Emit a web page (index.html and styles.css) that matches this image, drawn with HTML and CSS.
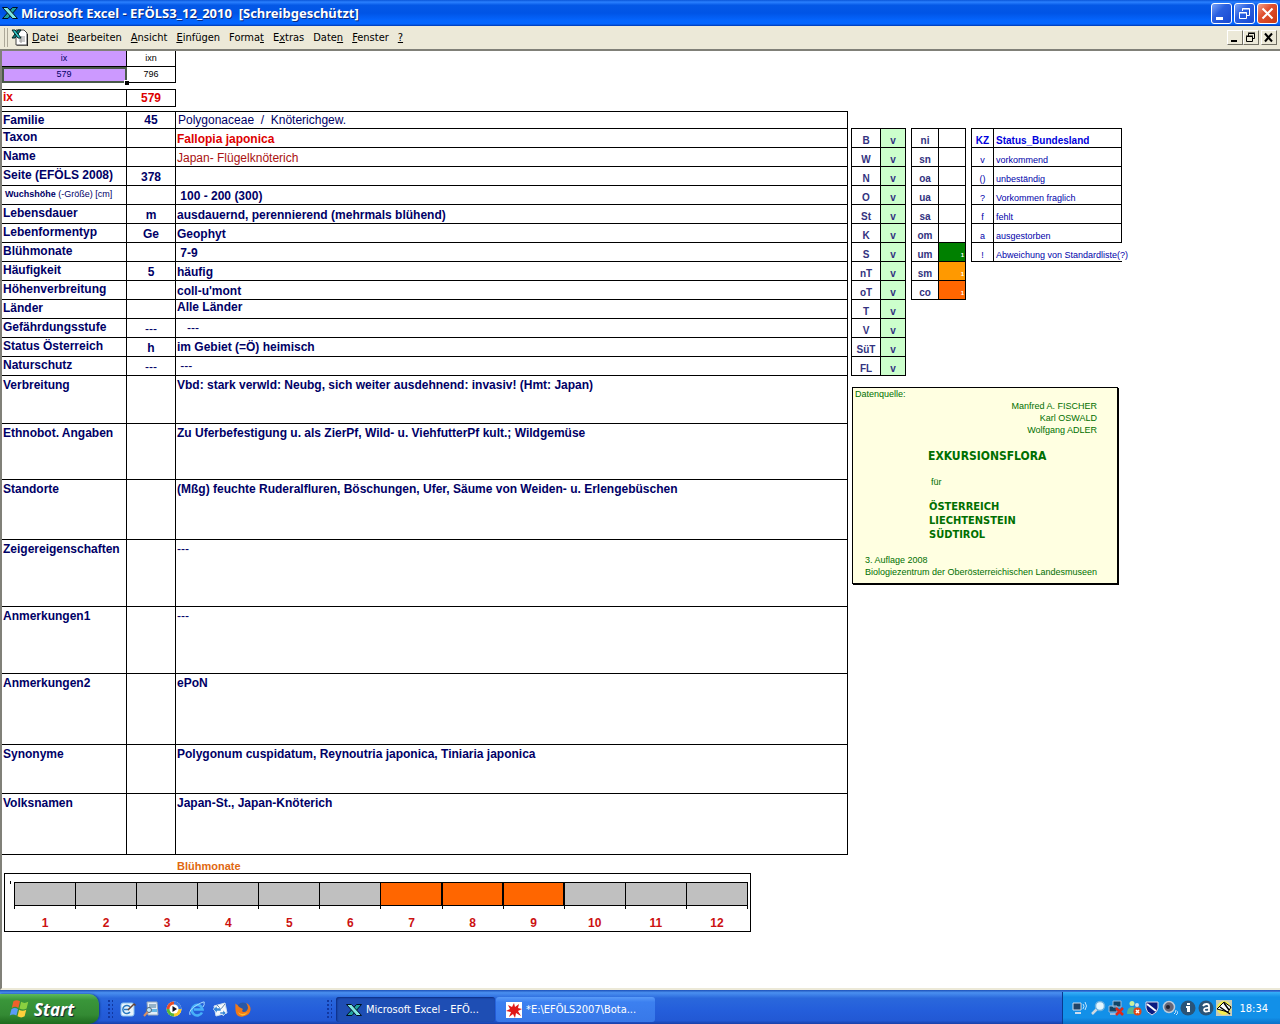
FILE: index.html
```
<!DOCTYPE html>
<html lang="de">
<head>
    <meta charset="UTF-8">
    <meta name="viewport" content="width=device-width, initial-scale=1.0">
    <title>Microsoft Excel - EFÖLS3_12_2010</title>
    <link rel="stylesheet" href="styles.css">
</head>
<body>
    <header class="titlebar">
        <svg class="icon" viewBox="0 0 16 16"><path d="M10.500 2.500h5L6 13.500H.5z" fill="#1fa0a0" stroke="#012"/><path d="M.5 2.500h5l10 11h-5z" fill="#7fe8e0" stroke="#012"/></svg>
        <h1>Microsoft Excel - EFÖLS3_12_2010&nbsp; [Schreibgeschützt]</h1>
        <div class="win-buttons">
            <button aria-label="Minimieren"><svg viewBox="0 0 19 19"><path d="M4 13h7v3H4z" fill="#fff"/></svg></button>
            <button aria-label="Wiederherstellen"><svg viewBox="0 0 19 19"><path d="M7.500 7V4.500h7v7H12M7 5h8M4.500 8.500h7v6h-7zM4 9h8" fill="none" stroke="#fff"/></svg></button>
            <button class="close" aria-label="Schließen"><svg viewBox="0 0 19 19"><path d="M4.500 4.500l10 10M14.500 4.500l-10 10" stroke="#fff" stroke-width="2"/></svg></button>
        </div>
    </header>
    <nav class="menubar">
        <span class="grip"></span>
        <svg class="doc" viewBox="0 0 17 17"><path d="M5 1h8l3 3v12H5z" fill="#fff" stroke="#444"/><path d="M16.500 5v12H6" fill="none" stroke="#222"/><path d="M8 8h6M8 10h6M8 12h6M10 7v7" stroke="#999"/><path d="M7 1h3L4 9H1z" fill="#0a8080" stroke="#022"/><path d="M1 1h3l6 8H7z" fill="#3cc" stroke="#022"/></svg>
        <button><u>D</u>atei</button>
        <button><u>B</u>earbeiten</button>
        <button><u>A</u>nsicht</button>
        <button><u>E</u>infügen</button>
        <button>Forma<u>t</u></button>
        <button>E<u>x</u>tras</button>
        <button>Date<u>n</u></button>
        <button><u>F</u>enster</button>
        <button><u>?</u></button>
        <div class="doc-buttons">
            <button aria-label="Mappe minimieren"><svg viewBox="0 0 13 13"><path d="M3 9h6v2H3z"/></svg></button>
            <button aria-label="Mappe wiederherstellen"><svg viewBox="0 0 13 13"><path d="M4.500 5V2.500h6v5H8M4 2h7M2.500 5.500h6v5h-6zM2 5h7" fill="none" stroke="#000"/></svg></button>
            <button class="close" aria-label="Mappe schließen"><svg viewBox="0 0 13 13"><path d="M3 2.500l7 8M10 2.500l-7 8" stroke="#000" stroke-width="2"/></svg></button>
        </div>
    </nav>
    <main class="sheet">
        <section class="record">
            <table class="cells index">
                <tr><td class="lilac">ix</td><td>ixn</td></tr>
                <tr><td class="lilac selected">579</td><td>796</td></tr>
            </table>
            <table class="cells current">
                <tr><th scope="row">ix</th><td>579</td></tr>
            </table>
            <table class="cells plant">
                <tr class="first"><th scope="row">Familie</th><td>45</td><td class="plain">Polygonaceae&nbsp; /&nbsp; Knöterichgew.</td></tr>
                <tr><th scope="row">Taxon</th><td></td><td class="taxon">Fallopia japonica</td></tr>
                <tr><th scope="row">Name</th><td></td><td class="name">Japan- Flügelknöterich</td></tr>
                <tr><th scope="row">Seite (EFÖLS 2008)</th><td>378</td><td></td></tr>
                <tr><th scope="row" class="small"><b>Wuchshöhe</b> (-Größe) [cm]</th><td></td><td>&nbsp;100 - 200 (300)</td></tr>
                <tr><th scope="row">Lebensdauer</th><td>m</td><td>ausdauernd, perennierend (mehrmals blühend)</td></tr>
                <tr><th scope="row">Lebenformentyp</th><td>Ge</td><td>Geophyt</td></tr>
                <tr><th scope="row">Blühmonate</th><td></td><td>&nbsp;7-9</td></tr>
                <tr><th scope="row">Häufigkeit</th><td>5</td><td>häufig</td></tr>
                <tr><th scope="row">Höhenverbreitung</th><td></td><td>coll-u'mont</td></tr>
                <tr><th scope="row">Länder</th><td></td><td class="top">Alle Länder</td></tr>
                <tr><th scope="row">Gefährdungsstufe</th><td class="none">---</td><td class="middle none">&nbsp;&nbsp; ---</td></tr>
                <tr><th scope="row">Status Österreich</th><td>h</td><td class="middle">im Gebiet (=Ö) heimisch</td></tr>
                <tr><th scope="row">Naturschutz</th><td class="none">---</td><td class="middle none">&nbsp;---</td></tr>
                <tr class="tall verbreitung"><th scope="row">Verbreitung</th><td></td><td>Vbd: stark verwld: Neubg, sich weiter ausdehnend: invasiv! (Hmt: Japan)</td></tr>
                <tr class="tall angaben"><th scope="row">Ethnobot. Angaben</th><td></td><td>Zu Uferbefestigung u. als ZierPf, Wild- u. ViehfutterPf kult.; Wildgemüse</td></tr>
                <tr class="tall standorte"><th scope="row">Standorte</th><td></td><td>(Mßg) feuchte Ruderalfluren, Böschungen, Ufer, Säume von Weiden- u. Erlengebüschen</td></tr>
                <tr class="tall notes"><th scope="row">Zeigereigenschaften</th><td></td><td class="none">---</td></tr>
                <tr class="tall notes"><th scope="row">Anmerkungen1</th><td></td><td class="none">---</td></tr>
                <tr class="tall notes2"><th scope="row">Anmerkungen2</th><td></td><td>ePoN</td></tr>
                <tr class="tall synonyme"><th scope="row">Synonyme</th><td></td><td>Polygonum cuspidatum, Reynoutria japonica, Tiniaria japonica</td></tr>
                <tr class="tall volksnamen"><th scope="row">Volksnamen</th><td></td><td>Japan-St., Japan-Knöterich</td></tr>
            </table>
            <h2>Blühmonate</h2>
            <div class="chart">
                <ol>
                    <li>1</li>
                    <li>2</li>
                    <li>3</li>
                    <li>4</li>
                    <li>5</li>
                    <li>6</li>
                    <li class="bloom">7</li>
                    <li class="bloom">8</li>
                    <li class="bloom">9</li>
                    <li>10</li>
                    <li>11</li>
                    <li>12</li>
                </ol>
            </div>
        </section>
        <aside class="side">
            <div class="status-tables">
                <table class="cells codes lands">
                    <tr><th scope="row">B</th><td>v</td></tr>
                    <tr><th scope="row">W</th><td>v</td></tr>
                    <tr><th scope="row">N</th><td>v</td></tr>
                    <tr><th scope="row">O</th><td>v</td></tr>
                    <tr><th scope="row">St</th><td>v</td></tr>
                    <tr><th scope="row">K</th><td>v</td></tr>
                    <tr><th scope="row">S</th><td>v</td></tr>
                    <tr><th scope="row">nT</th><td>v</td></tr>
                    <tr><th scope="row">oT</th><td>v</td></tr>
                    <tr><th scope="row">T</th><td>v</td></tr>
                    <tr><th scope="row">V</th><td>v</td></tr>
                    <tr><th scope="row">SüT</th><td>v</td></tr>
                    <tr><th scope="row">FL</th><td>v</td></tr>
                </table>
                <table class="cells codes levels">
                    <tr><th scope="row">ni</th><td></td></tr>
                    <tr><th scope="row">sn</th><td></td></tr>
                    <tr><th scope="row">oa</th><td></td></tr>
                    <tr><th scope="row">ua</th><td></td></tr>
                    <tr><th scope="row">sa</th><td></td></tr>
                    <tr><th scope="row">om</th><td></td></tr>
                    <tr><th scope="row">um</th><td class="um">1</td></tr>
                    <tr><th scope="row">sm</th><td class="sm">1</td></tr>
                    <tr><th scope="row">co</th><td class="co">1</td></tr>
                </table>
                <table class="cells legend">
                    <tr><th>KZ</th><th>Status_Bundesland</th></tr>
                    <tr><td>v</td><td>vorkommend</td></tr>
                    <tr><td>()</td><td>unbeständig</td></tr>
                    <tr><td>?</td><td>Vorkommen fraglich</td></tr>
                    <tr><td>f</td><td>fehlt</td></tr>
                    <tr><td>a</td><td>ausgestorben</td></tr>
                    <tr><td>!</td><td class="open">Abweichung von Standardliste(?)</td></tr>
                </table>
            </div>
            <div class="source">
                <p>Datenquelle:</p>
                <p class="authors">Manfred A. FISCHER<br>Karl OSWALD<br>Wolfgang ADLER</p>
                <h3>EXKURSIONSFLORA</h3>
                <p class="for">für</p>
                <p class="countries">ÖSTERREICH<br>LIECHTENSTEIN<br>SÜDTIROL</p>
                <p class="edition">3. Auflage 2008<br>Biologiezentrum der Oberösterreichischen Landesmuseen</p>
            </div>
        </aside>
    </main>
    <footer class="taskbar">
        <button class="start">
            <svg viewBox="0 0 20 20"><path d="M4 3q3-2 6 0L8.500 9q-3-2-6 0z" fill="#f0602c"/><path d="M11 3.500q3 2 6.500 0L16 9.500q-3 2-6.500 0z" fill="#8ad040"/><path d="M2.200 10.200q3-2 6 0L6.700 16q-3-2-6 0z" fill="#5a9cf8"/><path d="M9.200 10.700q3 2 6.500 0l-1.500 6q-3 2-6.500 0z" fill="#fcd03c"/></svg>
            Start
        </button>
        <div class="quick">
            <span class="dots"></span>
            <svg viewBox="0 0 16 16"><rect x="1" y="2" width="13" height="13" rx="2" fill="#e8f4fc" stroke="#8cc4f0"/><path d="M10 6a4 4 0 1 0 0 5M4 8.500h5" fill="none" stroke="#2878c0" stroke-width="1.500"/><path d="M8 9l6-6 1.500 1.500" fill="none" stroke="#643" stroke-width="1.500"/></svg>
            <svg viewBox="0 0 16 16"><path d="M4 1h10l1 13H5z" fill="#e4eef8" stroke="#9ab"/><path d="M6 4h7M6 6h7" stroke="#479"/><path d="M6 8h8v3H6z" fill="#68b8e8"/><circle cx="6" cy="9" r="2.500" fill="#bfe4fa" stroke="#567"/><path d="M4.500 11L1 15" stroke="#d89060" stroke-width="2"/></svg>
            <svg viewBox="0 0 16 16"><circle cx="8" cy="8" r="7.500" fill="#eee"/><path d="M8 .5A7.500 7.500 0 0 0 .5 8H8z" fill="#e84c28"/><path d="M8 .5A7.500 7.500 0 0 1 15.500 8H8z" fill="#3c78e0"/><path d="M.5 8A7.500 7.500 0 0 0 8 15.500V8z" fill="#58b838"/><path d="M15.500 8A7.500 7.500 0 0 1 8 15.500V8z" fill="#f8c828"/><circle cx="8" cy="8" r="4.500" fill="#fff"/><path d="M6.500 5l4.500 3-4.500 3z" fill="#112"/></svg>
            <svg viewBox="0 0 16 16"><path d="M13 11.500a5.300 5.300 0 1 1 .5-3H5" fill="none" stroke="#48b0f8" stroke-width="2.600"/><path d="M1 14Q-1 9 8 4t7-2q1 1-1 4" fill="none" stroke="#a8dcff"/></svg>
            <svg viewBox="0 0 16 16"><path d="M2 5l11-3 2 10-11 3z" fill="#f4f8fc" stroke="#cde"/><path d="M5 4l4 4 4-5" fill="none" stroke="#68a"/><path d="M1 8l4-3v2h4v3H5v2zM14 12l-3-3v2H8v2h3v2z" fill="#3888d8" stroke="#fff" stroke-width=".5"/></svg>
            <svg viewBox="0 0 16 16"><circle cx="8" cy="8" r="6.500" fill="#2858a8"/><path d="M1 3q2 1 3 3l4 2q-2 3 1 3t4-4q0-3-2-5 5 2 4.500 7T8 15.500.5 9 1 3z" fill="#f07818"/><path d="M3 11q4 4 10 0-3 4-6 3.500T3 11z" fill="#fcc030"/></svg>
            <span class="dots last"></span>
        </div>
        <button class="task active"><svg viewBox="0 0 16 16"><path d="M10.500 2.500h5L6 13.500H.5z" fill="#1fa0a0" stroke="#012"/><path d="M.5 2.500h5l10 11h-5z" fill="#7fe8e0" stroke="#012"/></svg>Microsoft Excel - EFÖ...</button>
        <button class="task"><svg viewBox="0 0 16 16"><path d="M0 0h16v16H0z" fill="#fff"/><path d="M8 1l1 4 4-3-1 4 4 1-4 2 3 5-5-3-1 5-2-4-4 3 2-5-5-1 4-2-2-4 4 2z" fill="#e01818"/></svg>*E:\EFÖLS2007\Bota...</button>
        <div class="tray">
            <svg viewBox="0 0 16 16"><path d="M1 3h8v7H1z" fill="#246" stroke="#cde"/><path d="M3 13h6" stroke="#cde" stroke-width="2"/><path d="M11 4q2 2 0 5M13 2q3 4 0 8" fill="none" stroke="#bfe4ff"/></svg>
            <svg viewBox="0 0 16 16"><circle cx="10" cy="6" r="4.500" fill="#e4f6ff" stroke="#6ab0e0" stroke-width="1.500"/><path d="M6.500 9.500L2 14" stroke="#d0d8e0" stroke-width="2.500"/></svg>
            <svg viewBox="0 0 16 16"><path d="M5 1h8v6H5zM1 6h8v6H1z" fill="#146" stroke="#9bd"/><path d="M2 14h6" stroke="#9bd" stroke-width="2"/><path d="M8 8l7 7M15 8l-7 7" stroke="#e02818" stroke-width="2.500"/></svg>
            <svg viewBox="0 0 16 16"><circle cx="6" cy="3.500" r="2.500" fill="#c8f0a0"/><path d="M1 14q0-7 5-7t5 7z" fill="#58b890"/><circle cx="11" cy="5" r="2" fill="#cde"/><path d="M7 12q0-5 4-5t4 5z" fill="#3898c8"/><circle cx="11.500" cy="11.500" r="4" fill="#e04818"/><path d="M10 10l3 3M13 10l-3 3" stroke="#fff" stroke-width="1.500"/></svg>
            <svg viewBox="0 0 16 16"><path d="M2 2h12v6q0 4-6 7-6-3-6-7z" fill="#0a1a80" stroke="#dde"/><path d="M3 4l9 7" stroke="#fff" stroke-width="2"/></svg>
            <svg viewBox="0 0 16 16"><circle cx="7" cy="7" r="5.500" fill="#667" stroke="#bcd" stroke-width="1.500"/><circle cx="6" cy="7" r="2" fill="#223"/><path d="M12 14q2-1 2-4M14 15q2-1 2-4" fill="none" stroke="#cfe8ff"/></svg>
            <svg viewBox="0 0 16 16"><circle cx="8" cy="8" r="7.500" fill="#2a5478"/><path d="M7 3h3v2H7zM6 6h4v6H7V8H6z" fill="#fff"/></svg>
            <svg viewBox="0 0 16 16"><circle cx="8" cy="8" r="7.500" fill="#2a5478"/><path d="M5 6q1-2 3.500-2T11 6v6M11 8Q6 7.500 6 10t5 1" fill="none" stroke="#fff" stroke-width="1.800"/></svg>
            <svg viewBox="0 0 16 16"><path d="M0 0h16v16H0z" fill="#c8ccb8"/><circle cx="8" cy="8" r="7" fill="#f4ec50"/><path d="M1 9l7-7 7 5-3 5z" fill="#fff" stroke="#000"/><path d="M4 7l10 7M8 3l5 7" stroke="#000" stroke-width="1.500"/></svg>
            <time>18:34</time>
        </div>
    </footer>
</body>
</html>
```
FILE: styles.css
```
*, *::before {
    box-sizing: border-box;
}
body {
    margin: 0;
    min-height: 100vh;
    display: flex;
    flex-direction: column;
    background: #fff;
    font-family: "Liberation Sans", Arial, sans-serif;
    font-size: 12px;
    color: #000066;
}
button {
    font: inherit;
    color: inherit;
    padding: 0;
    border: 0;
    background: none;
}
svg {
    display: block;
    flex: none;
}
h1, h2, h3, p, ol {
    margin: 0;
    padding: 0;
}

/* title bar */
.titlebar {
    display: flex;
    align-items: center;
    height: 26px;
    padding: 0 2px;
    background: linear-gradient(#0a55d8, #2a80ff 8%, #0458e6 20%, #0054e6 50%, #0566ff 80%, #0566ff 92%, #0038b0);
    color: #fff;
}
.titlebar .icon {
    width: 16px;
    height: 16px;
    margin-right: 3px;
}
.titlebar h1 {
    flex: 1;
    font: bold 13px/18px "Noto Sans", Tahoma, sans-serif;
    text-shadow: 1px 1px #0a2a80;
}
.win-buttons {
    display: flex;
    gap: 2px;
}
.win-buttons button {
    width: 21px;
    height: 21px;
    border: 1px solid #fff;
    border-radius: 3px;
    background: linear-gradient(135deg, #7ba4f8, #2a60e0 40%, #1848d0);
}
.win-buttons .close {
    background: linear-gradient(135deg, #f0a088, #e05030 40%, #c83810);
}

/* menu bar */
.menubar {
    display: flex;
    align-items: center;
    height: 25px;
    padding: 0 3px 0 4px;
    background: #ece9d8;
    border-bottom: 2px solid #808078;
    color: #000;
    font: 11px "DejaVu Sans Condensed", Tahoma, sans-serif;
}
.menubar > button {
    margin-right: 1px;
    padding: 0 4px;
}
.menubar .grip {
    width: 4px;
    height: 19px;
    border: solid #aca899;
    border-width: 0 1px;
}
.menubar .doc {
    width: 17px;
    height: 17px;
    margin: 0 0 0 3px;
}
.doc-buttons {
    display: flex;
    margin-left: auto;
}
.doc-buttons button {
    width: 16px;
    height: 15px;
    border: 1px solid;
    border-color: #fff #716f64 #716f64 #fff;
}
.doc-buttons svg {
    width: 13px;
    height: 13px;
}
.doc-buttons .close {
    margin-left: 2px;
}

/* worksheet */
.sheet {
    flex: 1;
    display: grid;
    grid-template-columns: 846fr 432fr;
    border-left: 2px solid #808078;
    border-bottom: 2px solid #ece9d8;
}
.cells {
    table-layout: fixed;
    border-spacing: 0;
    line-height: 15px;
}
.cells td, .cells th {
    padding: 0 1px;
    border: solid #000;
    border-width: 0 1px 1px 0;
    white-space: nowrap;
    text-align: left;
    vertical-align: bottom;
}
.index {
    width: 174px;
    color: #000;
    font-size: 9px;
}
.index tr {
    height: 16px;
}
.index td {
    text-align: center;
    vertical-align: middle;
}
.index td:first-child, .current th {
    width: 125px;
}
.index .lilac {
    background: #cc99ff;
    color: #000066;
}
.index .selected {
    position: relative;
    outline: 2px solid #4a5a4a;
    outline-offset: -2px;
}
.selected::before {
    content: "";
    position: absolute;
    right: -3px;
    bottom: -3px;
    width: 5px;
    height: 5px;
    background: #000;
    border: solid #fff;
    border-width: 1px 0 0 1px;
}
.current {
    width: 174px;
    margin-top: 6px;
    border-top: 1px solid #000;
    color: #dd0000;
}
.current tr {
    height: 17px;
}
.current td {
    text-align: center;
    font-weight: bold;
}
.cells.current th {
    vertical-align: top;
}
.plant {
    width: 100%;
    margin-top: 4px;
    border-top: 1px solid #000;
    font-weight: bold;
}
.plant tr {
    height: 19px;
}
.plant .first {
    height: 17px;
}
.plant th {
    width: 125px;
}
.cells.plant th {
    padding-top: 1px;
    vertical-align: top;
}
.plant td:nth-child(2) {
    width: 49px;
    text-align: center;
}
.cells.plant .small {
    padding-left: 3px;
    font-size: 9px;
    font-weight: normal;
}
.cells.plant .plain {
    font-weight: normal;
    padding-left: 2px;
}
.plant .taxon {
    color: #dd0000;
}
.plant .name {
    color: #aa1111;
    font-weight: normal;
}
.plant .top {
    vertical-align: top;
}
.plant .middle {
    vertical-align: middle;
}
.plant .none {
    font-weight: normal;
}
.cells.plant .tall th, .cells.plant .tall td {
    padding-top: 2px;
    vertical-align: top;
}
.plant .verbreitung {
    height: 48px;
}
.plant .angaben {
    height: 56px;
}
.plant .standorte {
    height: 60px;
}
.plant .notes {
    height: 67px;
}
.plant .notes2 {
    height: 71px;
}
.plant .synonyme {
    height: 49px;
}
.plant .volksnamen {
    height: 61px;
}

/* flowering months */
.record h2 {
    margin: 4px 0 0 175px;
    color: #e06810;
    font-size: 11px;
    line-height: 14px;
}
.chart {
    margin: 0 97px 0 2px;
    padding: 8px 2px 0 9px;
    height: 59px;
    border: 1px solid #000;
    background: linear-gradient(#000, #000) 5px 7px / 1px 3px no-repeat;
}
.chart ol {
    display: grid;
    grid-template-columns: repeat(12, 1fr);
    list-style: none;
    border-right: 1px solid #000;
    height: 27px;
}
.chart li {
    height: 27px;
    border-left: 1px solid #000;
    color: #cc1111;
    font-weight: bold;
    text-align: center;
    line-height: 16px;
}
.chart li::before {
    content: "";
    display: block;
    height: 24px;
    margin-bottom: 9px;
    border: solid #000;
    border-width: 1px 0;
    background: #c0c0c0;
}
.chart .bloom::before {
    background: #ff6600;
    border-right-width: 1px;
}

/* status tables */
.side {
    padding: 77px 0 0 3px;
}
.status-tables {
    display: flex;
    align-items: flex-start;
    gap: 5px;
}
.status-tables .cells {
    border: solid #000;
    border-width: 1px 0 0 1px;
    font-size: 10px;
    line-height: 12px;
}
.status-tables tr {
    height: 19px;
}
.codes {
    width: 55px;
    color: #333380;
    font-weight: bold;
}
.codes th, .codes td {
    text-align: center;
}
.codes th {
    width: 29px;
}
.lands td {
    background: #ccffcc;
}
.levels th {
    width: 27px;
}
.levels td {
    color: #fff;
    font-size: 6px;
    text-align: right;
}
.levels .um {
    background: #008000;
}
.levels .sm {
    background: #ff9900;
}
.levels .co {
    background: #ff6600;
}
.status-tables .legend {
    width: 151px;
    color: #0000aa;
    font-size: 9px;
}
.legend th {
    color: #0000dd;
    font-size: 10px;
}
.legend tr :first-child {
    width: 22px;
    text-align: center;
}
.legend tr :last-child {
    padding-left: 2px;
}
.cells .open {
    border-right: 0;
}

/* source box */
.source {
    width: 266px;
    margin: 11px 0 0 1px;
    padding: 0 12px 5px;
    background: #ffffe1;
    border: 1px solid #000;
    box-shadow: 1px 1px #000;
    color: #006f00;
    font-size: 9px;
    line-height: 12px;
}
.source p:first-child {
    margin-left: -10px;
}
.source .authors {
    margin-right: 8px;
    text-align: right;
}
.source h3 {
    margin: 13px 0 0 63px;
    font: bold 12px/14px "DejaVu Sans Condensed", Tahoma, sans-serif;
}
.source .for {
    margin: 13px 0 0 66px;
}
.source .countries {
    margin: 12px 0 0 64px;
    font: bold 11px/14px "DejaVu Sans Condensed", Tahoma, sans-serif;
}
.source .edition {
    margin-top: 12px;
    white-space: nowrap;
}

/* taskbar */
.taskbar {
    display: flex;
    align-items: flex-end;
    height: 34px;
    background: linear-gradient(#1c50b8, #4a90f0 8%, #2a68dc 24%, #245edb 60%, #2258d4 90%, #1840a8);
    color: #fff;
    font: 11px "DejaVu Sans Condensed", Tahoma, sans-serif;
}
.start {
    display: flex;
    align-items: center;
    gap: 3px;
    width: 99px;
    height: 30px;
    padding-left: 9px;
    border-radius: 0 10px 10px 0;
    background: linear-gradient(#5cb85c, #3a963a 20%, #338a33 70%, #1e6a1e);
    box-shadow: 1px 0 2px #103a90;
    font: italic bold 17px "Open Sans", sans-serif;
    text-shadow: 1px 1px 1px #123;
}
.start svg {
    width: 22px;
    height: 22px;
}
.quick {
    display: flex;
    align-items: center;
    gap: 7px;
    width: 237px;
    height: 30px;
    padding: 0 4px 0 8px;
}
.quick svg, .task svg, .tray svg {
    width: 16px;
    height: 16px;
}
.dots {
    width: 6px;
    height: 20px;
    background: radial-gradient(circle, #1238a0 1px, transparent 1px) 0 0 / 4px 4px;
}
.dots.last {
    margin-left: auto;
}
.task {
    display: flex;
    align-items: center;
    gap: 4px;
    width: 159px;
    height: 25px;
    margin: 0 1px 2px 0;
    padding-left: 10px;
    border-radius: 3px;
    background: linear-gradient(#5a9cf8, #3c80f0 20%, #3878e8);
    white-space: nowrap;
}
.task.active {
    background: #1e4eb4;
    box-shadow: inset 1px 1px 2px #0c2c80;
}
.tray {
    display: flex;
    align-items: center;
    gap: 2px;
    height: 32px;
    margin-left: auto;
    padding: 0 12px 0 9px;
    border-left: 1px solid #0a3a90;
    background: linear-gradient(#38b0f8, #1290e8 16%, #1290e8 80%, #0c70c8);
}
.tray time {
    margin-left: 5px;
}
```
